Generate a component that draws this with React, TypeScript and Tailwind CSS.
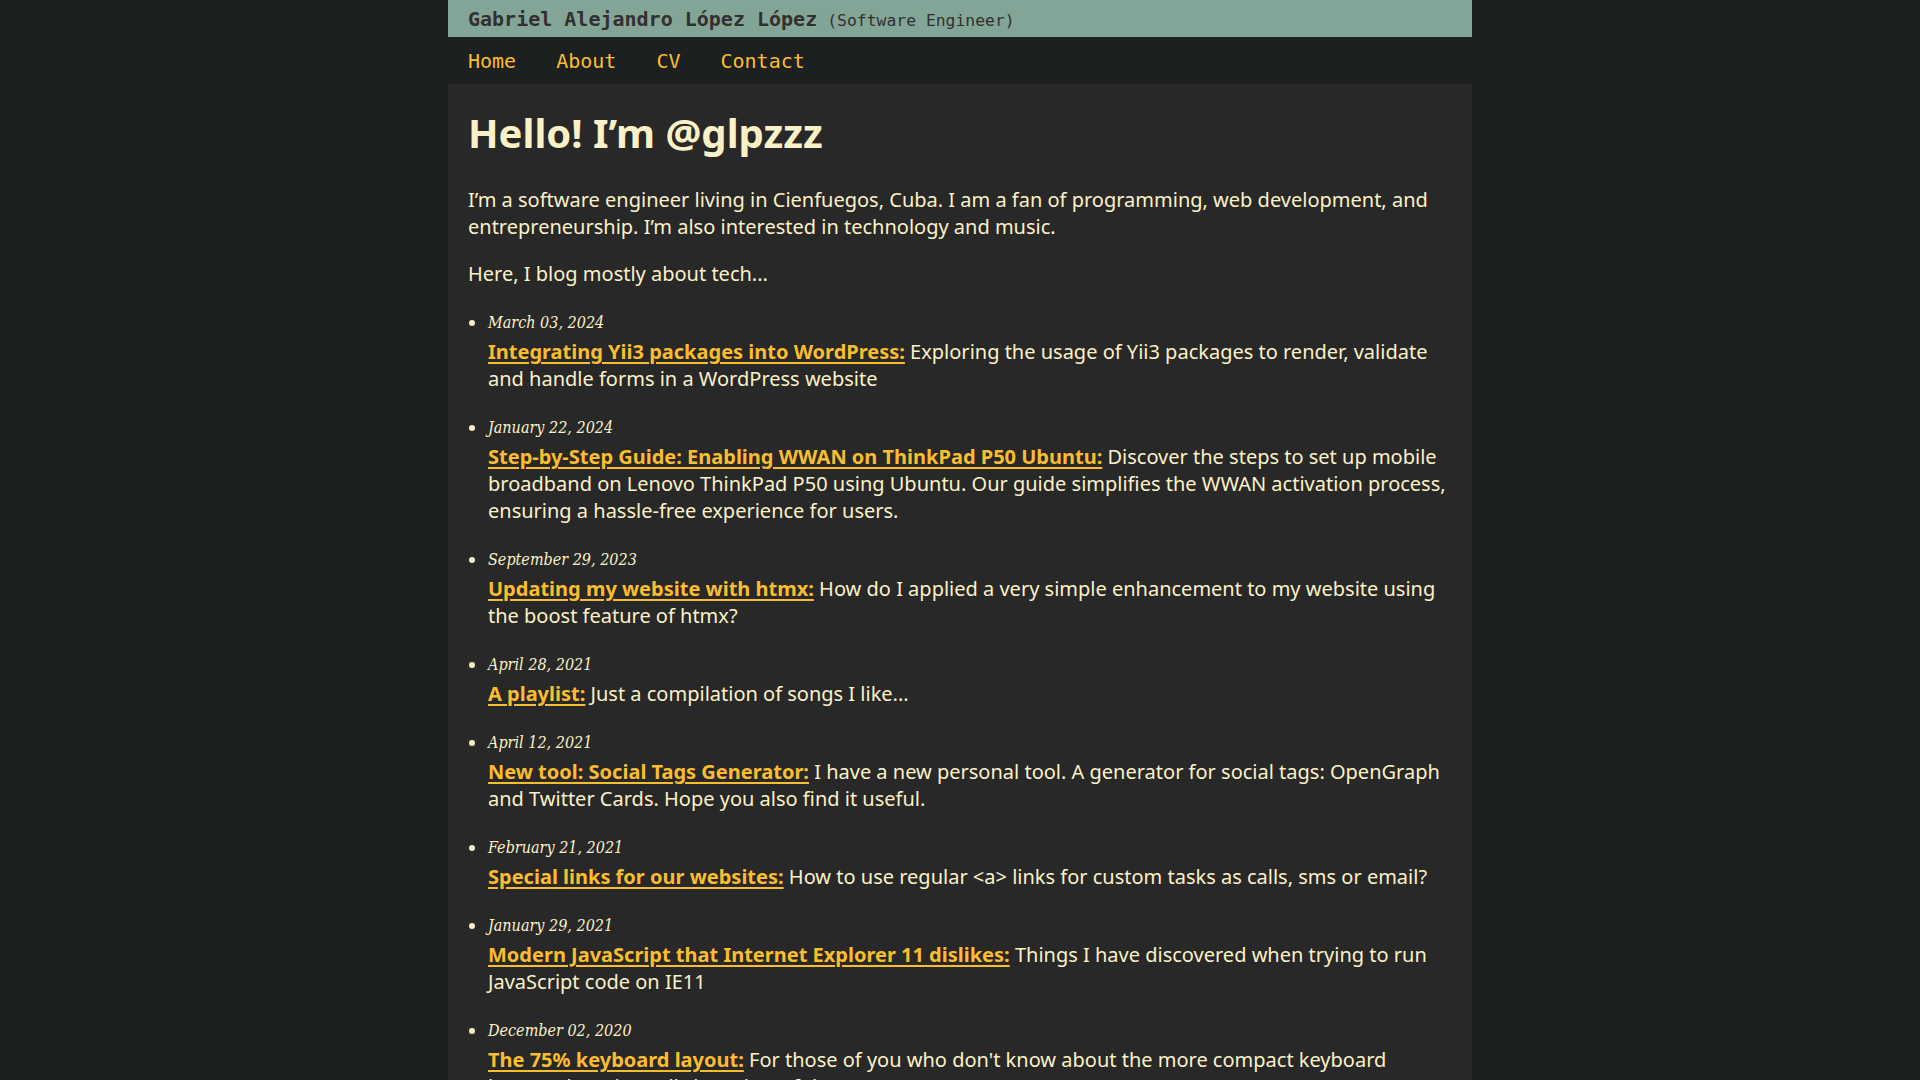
import React from "react";

type Post = {
  date: string;
  title: string;
  summary: string;
};

const posts: Post[] = [
  {
    date: "March 03, 2024",
    title: "Integrating Yii3 packages into WordPress:",
    summary:
      "Exploring the usage of Yii3 packages to render, validate and handle forms in a WordPress website",
  },
  {
    date: "January 22, 2024",
    title: "Step-by-Step Guide: Enabling WWAN on ThinkPad P50 Ubuntu:",
    summary:
      "Discover the steps to set up mobile broadband on Lenovo ThinkPad P50 using Ubuntu. Our guide simplifies the WWAN activation process, ensuring a hassle-free experience for users.",
  },
  {
    date: "September 29, 2023",
    title: "Updating my website with htmx:",
    summary:
      "How do I applied a very simple enhancement to my website using the boost feature of htmx?",
  },
  {
    date: "April 28, 2021",
    title: "A playlist:",
    summary: "Just a compilation of songs I like...",
  },
  {
    date: "April 12, 2021",
    title: "New tool: Social Tags Generator:",
    summary:
      "I have a new personal tool. A generator for social tags: OpenGraph and Twitter Cards. Hope you also find it useful.",
  },
  {
    date: "February 21, 2021",
    title: "Special links for our websites:",
    summary:
      "How to use regular <a> links for custom tasks as calls, sms or email?",
  },
  {
    date: "January 29, 2021",
    title: "Modern JavaScript that Internet Explorer 11 dislikes:",
    summary:
      "Things I have discovered when trying to run JavaScript code on IE11",
  },
  {
    date: "December 02, 2020",
    title: "The 75% keyboard layout:",
    summary:
      "For those of you who don't know about the more compact keyboard layouts, here is my little review of the 75% one.",
  },
];

const navLinks = ["Home", "About", "CV", "Contact"];

const App = () => {
  return (
    <div className="min-h-screen bg-[#1d2021] font-['Noto_Sans',sans-serif] text-[#fbf1c7]">
      <div className="mx-auto w-[1024px]">
        {/* Site title */}
        <header className="flex h-[37px] items-center bg-[#83a598] px-5 pt-[2px] font-['DejaVu_Sans_Mono',monospace] text-[#32302f]">
          <div className="flex items-baseline gap-[10px] leading-none">
            <span className="text-[20px] font-bold">
              Gabriel Alejandro López López
            </span>
            <span className="text-[16.4px]">(Software Engineer)</span>
          </div>
        </header>

        {/* Nav */}
        <nav className="flex h-[47px] items-center gap-10 px-5 font-['DejaVu_Sans_Mono',monospace] text-[20px] text-[#fabd2f]">
          {navLinks.map((link) => (
            <a key={link} href="#" className="leading-none">
              {link}
            </a>
          ))}
        </nav>

        <main className="bg-[#282828] px-5 pt-[25px] pb-12">
          <h1 className="mb-[29px] text-[40px] font-bold leading-[48px] text-[#fbf1c7]">
            Hello! I’m @glpzzz
          </h1>
          <p className="mb-[20px] text-[20px] leading-[27px]">
            I’m a software engineer living in Cienfuegos, Cuba. I am a fan of
            programming, web development, and entrepreneurship. I’m also
            interested in technology and music.
          </p>
          <p className="mb-[23px] text-[20px] leading-[27px]">
            Here, I blog mostly about tech...
          </p>

          <ul className="flex flex-col gap-[23px]">
            {posts.map((post) => (
              <li key={post.date} className="flex">
                <div className="w-[20px] shrink-0">
                  <div className="mt-[10px] ml-[1px] h-[6px] w-[6px] rounded-full bg-[#fbf1c7]" />
                </div>
                <div className="flex-1">
                  <div className="mt-[1px] font-['DejaVu_Serif_Condensed','DejaVu_Serif',serif] text-[16px] leading-[24px] italic [font-stretch:condensed]">
                    {post.date}
                  </div>
                  <p className="mt-[3px] text-[20px] leading-[27px]">
                    <a
                      href="#"
                      className="font-bold text-[#fabd2f] underline decoration-2 underline-offset-[3px]"
                    >
                      {post.title}
                    </a>{" "}
                    {post.summary}
                  </p>
                </div>
              </li>
            ))}
          </ul>
        </main>
      </div>
    </div>
  );
};

export default App;
